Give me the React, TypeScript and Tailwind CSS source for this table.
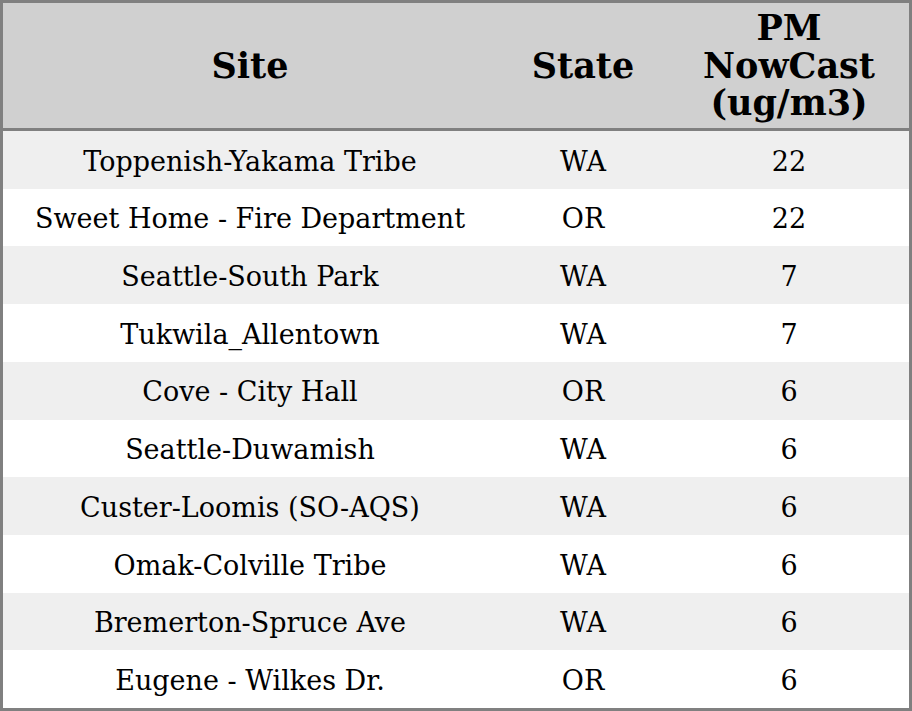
import React from "react";

const rows: [string, string, string][] = [
  ["Toppenish-Yakama Tribe", "WA", "22"],
  ["Sweet Home - Fire Department", "OR", "22"],
  ["Seattle-South Park", "WA", "7"],
  ["Tukwila_Allentown", "WA", "7"],
  ["Cove - City Hall", "OR", "6"],
  ["Seattle-Duwamish", "WA", "6"],
  ["Custer-Loomis (SO-AQS)", "WA", "6"],
  ["Omak-Colville Tribe", "WA", "6"],
  ["Bremerton-Spruce Ave", "WA", "6"],
  ["Eugene - Wilkes Dr.", "OR", "6"],
];

export default function App() {
  return (
    <div className="w-[912px] h-[711px] bg-white" style={{ fontFamily: '"DejaVu Serif", serif' }}>
      <div className="w-[912px] h-[711px] border-[3px] border-[#808080] flex flex-col text-black">
        <div className="grid grid-cols-[494px_172px_240px] h-[125px] bg-[#d0d0d0] border-b-[3px] border-[#808080] box-content font-bold text-[35px] leading-[37.5px]">
          <div className="flex items-center justify-center text-center">Site</div>
          <div className="flex items-center justify-center text-center">State</div>
          <div className="flex items-center justify-center text-center">
            <span>PM<br />NowCast<br />(ug/m3)</span>
          </div>
        </div>
        <div className="flex flex-col flex-1">
          {rows.map((r, i) => (
            <div
              key={i}
              className={`grid grid-cols-[494px_172px_240px] flex-1 text-[27px] pt-[4px] ${i % 2 === 0 ? "bg-[#efefef]" : "bg-white"}`}
            >
              <div className="flex items-center justify-center">{r[0]}</div>
              <div className="flex items-center justify-center">{r[1]}</div>
              <div className="flex items-center justify-center">{r[2]}</div>
            </div>
          ))}
        </div>
      </div>
    </div>
  );
}
